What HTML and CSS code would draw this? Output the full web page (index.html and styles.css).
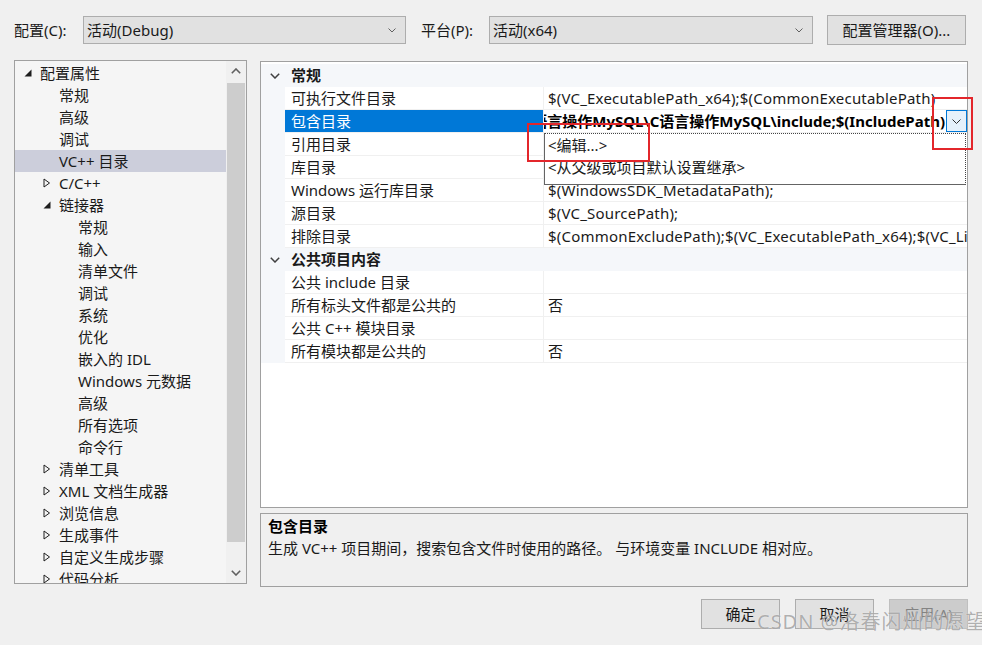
FILE: index.html
```html
<!DOCTYPE html>
<html lang="zh-CN">
<head>
<meta charset="utf-8">
<title>属性页</title>
<link rel="stylesheet" href="styles.css">
</head>
<body>
<div class="topbar">
  <span class="lbl lbl-config">配置(C):</span>
  <div class="combo combo-config"><span>活动(Debug)</span><svg class="cchev" width="8" height="5" viewBox="0 0 8 5"><polyline points="0.5,0.5 4,4 7.5,0.5" fill="none" stroke="#606060" stroke-width="1"/></svg></div>
  <span class="lbl lbl-platform">平台(P):</span>
  <div class="combo combo-platform"><span>活动(x64)</span><svg class="cchev" width="8" height="5" viewBox="0 0 8 5"><polyline points="0.5,0.5 4,4 7.5,0.5" fill="none" stroke="#606060" stroke-width="1"/></svg></div>
  <button class="btn btn-mgr">配置管理器(O)...</button>
</div>

<div class="main">
  <div class="tree">
    <div class="tree-list">
      <div class="ti l0"><span class="tg"><svg width="8" height="8" viewBox="0 0 8 8"><polygon points="7.5,0.5 7.5,7.5 0.5,7.5" fill="#1e1e1e"/></svg></span><span>配置属性</span></div>
      <div class="ti l1"><span class="tg"></span><span>常规</span></div>
      <div class="ti l1"><span class="tg"></span><span>高级</span></div>
      <div class="ti l1"><span class="tg"></span><span>调试</span></div>
      <div class="ti l1 sel"><span class="tg"></span><span>VC++ 目录</span></div>
      <div class="ti l1"><span class="tg"><svg width="8" height="10" viewBox="0 0 8 10"><polygon points="1,1 6.5,5 1,9" fill="none" stroke="#1e1e1e" stroke-width="1"/></svg></span><span>C/C++</span></div>
      <div class="ti l1"><span class="tg"><svg width="8" height="8" viewBox="0 0 8 8"><polygon points="7.5,0.5 7.5,7.5 0.5,7.5" fill="#1e1e1e"/></svg></span><span>链接器</span></div>
      <div class="ti l2"><span class="tg"></span><span>常规</span></div>
      <div class="ti l2"><span class="tg"></span><span>输入</span></div>
      <div class="ti l2"><span class="tg"></span><span>清单文件</span></div>
      <div class="ti l2"><span class="tg"></span><span>调试</span></div>
      <div class="ti l2"><span class="tg"></span><span>系统</span></div>
      <div class="ti l2"><span class="tg"></span><span>优化</span></div>
      <div class="ti l2"><span class="tg"></span><span>嵌入的 IDL</span></div>
      <div class="ti l2"><span class="tg"></span><span>Windows 元数据</span></div>
      <div class="ti l2"><span class="tg"></span><span>高级</span></div>
      <div class="ti l2"><span class="tg"></span><span>所有选项</span></div>
      <div class="ti l2"><span class="tg"></span><span>命令行</span></div>
      <div class="ti l1"><span class="tg"><svg width="8" height="10" viewBox="0 0 8 10"><polygon points="1,1 6.5,5 1,9" fill="none" stroke="#1e1e1e" stroke-width="1"/></svg></span><span>清单工具</span></div>
      <div class="ti l1"><span class="tg"><svg width="8" height="10" viewBox="0 0 8 10"><polygon points="1,1 6.5,5 1,9" fill="none" stroke="#1e1e1e" stroke-width="1"/></svg></span><span>XML 文档生成器</span></div>
      <div class="ti l1"><span class="tg"><svg width="8" height="10" viewBox="0 0 8 10"><polygon points="1,1 6.5,5 1,9" fill="none" stroke="#1e1e1e" stroke-width="1"/></svg></span><span>浏览信息</span></div>
      <div class="ti l1"><span class="tg"><svg width="8" height="10" viewBox="0 0 8 10"><polygon points="1,1 6.5,5 1,9" fill="none" stroke="#1e1e1e" stroke-width="1"/></svg></span><span>生成事件</span></div>
      <div class="ti l1"><span class="tg"><svg width="8" height="10" viewBox="0 0 8 10"><polygon points="1,1 6.5,5 1,9" fill="none" stroke="#1e1e1e" stroke-width="1"/></svg></span><span>自定义生成步骤</span></div>
      <div class="ti l1"><span class="tg"><svg width="8" height="10" viewBox="0 0 8 10"><polygon points="1,1 6.5,5 1,9" fill="none" stroke="#1e1e1e" stroke-width="1"/></svg></span><span>代码分析</span></div>
    </div>
    <div class="vscroll">
      <div class="sb-arrow"><svg width="10" height="6" viewBox="0 0 10 6"><polyline points="0.8,5.2 5,1 9.2,5.2" fill="none" stroke="#606060" stroke-width="1.6"/></svg></div>
      <div class="sb-track"><div class="sb-thumb"></div></div>
      <div class="sb-arrow"><svg width="10" height="6" viewBox="0 0 10 6"><polyline points="0.8,0.8 5,5 9.2,0.8" fill="none" stroke="#606060" stroke-width="1.6"/></svg></div>
    </div>
  </div>

  <div class="right">
    <div class="grid">
      <div class="row cat"><span class="mg"><svg width="10" height="6" viewBox="0 0 10 6"><polyline points="0.8,0.8 5,5 9.2,0.8" fill="none" stroke="#404040" stroke-width="1.5"/></svg></span><span class="nm">常规</span><span class="vl"></span></div>
      <div class="row"><span class="mg"></span><span class="nm">可执行文件目录</span><span class="vl">$(VC_ExecutablePath_x64);$(CommonExecutablePath)</span></div>
      <div class="row"><span class="mg"></span><span class="nm sel">包含目录</span><span class="vl vbold"><span>D:\C语言操作MySQL\C语言操作MySQL\include;$(IncludePath)</span></span></div>
      <div class="row"><span class="mg"></span><span class="nm">引用目录</span><span class="vl"></span></div>
      <div class="row"><span class="mg"></span><span class="nm">库目录</span><span class="vl"></span></div>
      <div class="row"><span class="mg"></span><span class="nm">Windows 运行库目录</span><span class="vl">$(WindowsSDK_MetadataPath);</span></div>
      <div class="row"><span class="mg"></span><span class="nm">源目录</span><span class="vl">$(VC_SourcePath);</span></div>
      <div class="row"><span class="mg"></span><span class="nm">排除目录</span><span class="vl">$(CommonExcludePath);$(VC_ExecutablePath_x64);$(VC_LibraryPath_x64)</span></div>
      <div class="row cat"><span class="mg"><svg width="10" height="6" viewBox="0 0 10 6"><polyline points="0.8,0.8 5,5 9.2,0.8" fill="none" stroke="#404040" stroke-width="1.5"/></svg></span><span class="nm">公共项目内容</span><span class="vl"></span></div>
      <div class="row"><span class="mg"></span><span class="nm">公共 include 目录</span><span class="vl"></span></div>
      <div class="row"><span class="mg"></span><span class="nm">所有标头文件都是公共的</span><span class="vl">否</span></div>
      <div class="row"><span class="mg"></span><span class="nm">公共 C++ 模块目录</span><span class="vl"></span></div>
      <div class="row"><span class="mg"></span><span class="nm">所有模块都是公共的</span><span class="vl">否</span></div>

      <div class="dd-btn"><svg width="9" height="5" viewBox="0 0 9 5"><polyline points="0.5,0.5 4.5,4.5 8.5,0.5" fill="none" stroke="#303030" stroke-width="1"/></svg></div>
      <div class="dd-list">
        <div class="dd-item">&lt;编辑...&gt;</div>
        <div class="dd-item">&lt;从父级或项目默认设置继承&gt;</div>
      </div>
    </div>

    <div class="desc">
      <div class="desc-title">包含目录</div>
      <div class="desc-text">生成 VC++ 项目期间，搜索包含文件时使用的路径。 与环境变量 INCLUDE 相对应。</div>
    </div>
  </div>
</div>

<div class="buttons">
  <button class="btn btn-act">确定</button>
  <button class="btn btn-act">取消</button>
  <button class="btn btn-act btn-dis">应用(A)</button>
</div>

<div class="mark mark-a"></div>
<div class="mark mark-b"></div>
<div class="watermark">CSDN @洛春闪灿的愿望</div>
</body>
</html>
```

FILE: styles.css
```css
* { box-sizing: border-box; }
html, body { margin: 0; padding: 0; }
body {
  width: 982px;
  height: 645px;
  position: relative;
  overflow: hidden;
  background: #f0f0f0;
  font-family: "Noto Sans", "Noto Sans CJK SC", sans-serif;
  font-size: 15px;
  color: #1a1a1a;
}

/* top bar */
.topbar {
  display: flex;
  align-items: center;
  height: 30px;
  margin-top: 15px;
  padding-left: 14px;
}
.lbl { line-height: 20px; white-space: nowrap; }
.lbl-config { width: 69px; }
.lbl-platform { width: 68px; margin-left: 15px; }
.combo {
  height: 28px;
  background: #e1e1e1;
  border: 1px solid #adadad;
  display: flex;
  align-items: center;
  justify-content: space-between;
  padding: 0 9px 0 3px;
  line-height: 20px;
}
.combo-config { width: 323px; }
.combo-platform { width: 324px; }
.cchev { display: block; }
.btn {
  font: inherit;
  color: #1a1a1a;
  background: #e1e1e1;
  border: 1px solid #adadad;
  padding: 0;
  height: 30px;
  line-height: 20px;
}
.btn-mgr { width: 139px; margin-left: 14px; }

/* main area */
.main {
  display: flex;
  margin-top: 15px;
  padding-left: 14px;
  gap: 13px;
}

/* tree */
.tree {
  width: 233px;
  height: 524px;
  border: 1px solid #a0a0a0;
  background: #f5f5f5;
  display: flex;
}
.tree-list {
  flex: 1;
  padding-top: 1px;
  overflow: hidden;
}
.ti {
  height: 22px;
  display: flex;
  align-items: center;
  white-space: nowrap;
  line-height: 22px;
}
.ti.l0 { padding-left: 6px; }
.ti.l1 { padding-left: 25px; }
.ti.l2 { padding-left: 44px; }
.ti.sel { background: #cccedb; }
.tg {
  width: 19px;
  height: 22px;
  display: flex;
  align-items: center;
  padding-left: 3px;
  flex: none;
}
.tg svg { display: block; }

.vscroll {
  width: 20px;
  display: flex;
  flex-direction: column;
  background: #f0f0f0;
}
.sb-arrow {
  height: 20px;
  display: flex;
  align-items: center;
  justify-content: center;
}
.sb-track {
  flex: 1;
  padding: 2px 1px 0 1px;
}
.sb-thumb {
  height: 459px;
  background: #cdcdcd;
}

/* right column */
.right {
  width: 708px;
  display: flex;
  flex-direction: column;
}
.grid {
  position: relative;
  margin-top: 1px;
  height: 447px;
  border: 1px solid #a0a0a0;
  background: #ffffff;
  padding-top: 2px;
}
.row {
  display: grid;
  grid-template-columns: 24px 259px 1fr;
  height: 23px;
  line-height: 22px;
}
.mg {
  background: #f5f7fa;
  display: flex;
  align-items: center;
  padding-left: 9px;
}
.mg svg { display: block; }
.nm {
  padding-left: 6px;
  border-bottom: 1px solid #f0f0f0;
  border-right: 1px solid #f0f0f0;
  white-space: nowrap;
  overflow: hidden;
}
.nm.sel {
  background: #0078d7;
  color: #ffffff;
}
.vl {
  padding-left: 4px;
  border-bottom: 1px solid #f0f0f0;
  white-space: nowrap;
  overflow: hidden;
  letter-spacing: 0.2px;
}
.vbold {
  display: flex;
  justify-content: flex-end;
  padding-right: 22px;
  font-weight: bold;
  color: #000;
  letter-spacing: 0;
}
.vbold span { flex: none; }
.row.cat { background: #f5f7fa; }
.row.cat .nm, .row.cat .vl {
  border: none;
  font-weight: bold;
  background: #f5f7fa;
}

.dd-btn {
  position: absolute;
  left: 685px;
  top: 48px;
  width: 21px;
  height: 22px;
  border: 1px solid #0078d7;
  background: #e5f1fb;
  display: flex;
  align-items: center;
  justify-content: center;
}
.dd-list {
  position: absolute;
  left: 283px;
  top: 71px;
  width: 422px;
  height: 52px;
  background: #ffffff;
  border: 1px solid #646464;
  border-top: 1px dotted #444;
  border-right: 1px dotted #444;
}
.dd-item {
  height: 22px;
  line-height: 22px;
  padding-left: 3px;
  white-space: nowrap;
}

.desc {
  margin-top: 5px;
  height: 74px;
  border: 1px solid #a0a0a0;
  background: #f0f0f0;
  padding: 1px 7px 0 7px;
}
.desc-title { font-weight: bold; line-height: 22px; color: #000; }
.desc-text { line-height: 22px; }

/* buttons */
.buttons {
  display: flex;
  justify-content: flex-end;
  gap: 15px;
  margin-top: 12px;
  padding-right: 14px;
}
.btn-act { width: 79px; }
.btn-dis {
  background: #cccccc;
  border-color: #bfbfbf;
  color: #838383;
}

/* annotations */
.mark {
  position: absolute;
  border: 2px solid #e3262b;
}
.mark-a { left: 527px; top: 123px; width: 123px; height: 39px; }
.mark-b { left: 932px; top: 97px; width: 41px; height: 53px; }

.watermark {
  position: absolute;
  left: 757px;
  top: 609px;
  font-size: 20px;
  line-height: 26px;
  letter-spacing: 1px;
  color: rgba(110, 110, 110, 0.55);
  text-shadow: 0 0 1px rgba(255, 255, 255, 0.9);
  white-space: nowrap;
}
```
